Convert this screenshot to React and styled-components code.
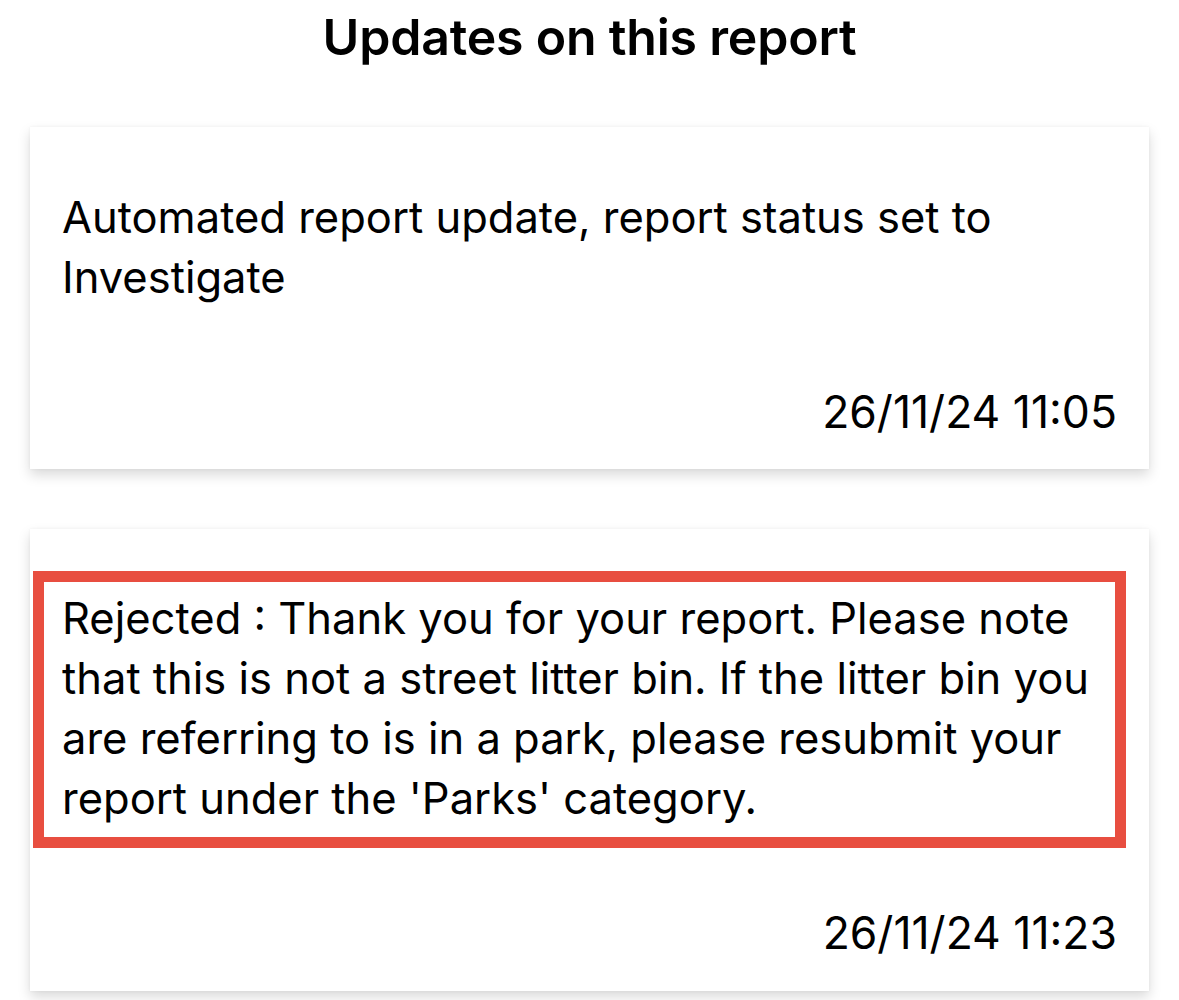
import styled, { createGlobalStyle } from "styled-components";

const updates = [
  {
    id: 1,
    text: "Automated report update, report status set to Investigate",
    date: "26/11/24 11:05",
    highlighted: false,
  },
  {
    id: 2,
    text: "Rejected : Thank you for your report. Please note that this is not a street litter bin. If the litter bin you are referring to is in a park, please resubmit your report under the 'Parks' category.",
    date: "26/11/24 11:23",
    highlighted: true,
  },
];

const GlobalStyle = createGlobalStyle`
  html, body {
    margin: 0;
    padding: 0;
    background: #ffffff;
  }
  body {
    font-family: Inter, "Noto Sans", "Liberation Sans", sans-serif;
    color: #000;
  }
`;

const Page = styled.main`
  display: flex;
  flex-direction: column;
  width: 1179px;
  height: 1000px;
  overflow: hidden;
  box-sizing: border-box;
`;

const Title = styled.h1`
  margin: 7px 0 0;
  font-size: 50px;
  line-height: 60px;
  font-weight: 600;
  text-align: center;
  letter-spacing: -0.2px;
`;

const List = styled.div`
  display: flex;
  flex-direction: column;
  gap: 60px;
  padding: 0 30px;
  margin-top: 60px;
`;

const Card = styled.section`
  display: flex;
  flex-direction: column;
  background: #fff;
  padding: ${(p) => (p.$highlighted ? "42px 32px 28px 32px" : "60px 32px 27px 32px")};
  box-shadow: 0 6px 12px rgba(0, 0, 0, 0.15), 0 0 3px rgba(0, 0, 0, 0.05);
`;

const Message = styled.p`
  margin: 0;
  font-size: 43.5px;
  line-height: 60px;
  font-weight: 400;
`;

const Highlight = styled.div`
  border: 11px solid #e84e40;
  margin: 0 -9px 0 -29px;
  padding: 6px 10px 9px 18px;
`;

const Stamp = styled.div`
  align-self: flex-end;
  font-size: 44.5px;
  line-height: 60px;
  margin-top: ${(p) => (p.$highlighted ? "55px" : "75px")};
`;

export default function App() {
  return (
    <>
      <GlobalStyle />
      <Page>
        <Title>Updates on this report</Title>
        <List>
          {updates.map((u) => (
            <Card key={u.id} $highlighted={u.highlighted}>
              {u.highlighted ? (
                <Highlight>
                  <Message>{u.text}</Message>
                </Highlight>
              ) : (
                <Message>{u.text}</Message>
              )}
              <Stamp $highlighted={u.highlighted}>{u.date}</Stamp>
            </Card>
          ))}
        </List>
      </Page>
    </>
  );
}
